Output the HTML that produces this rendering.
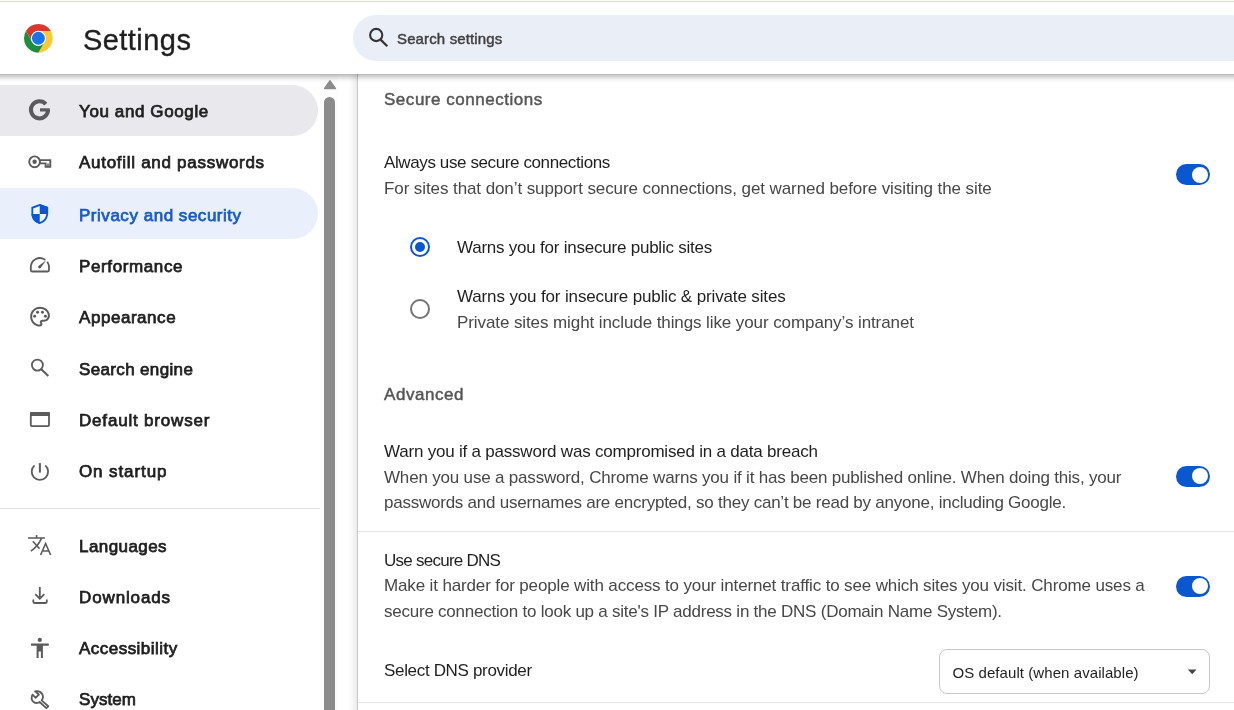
<!DOCTYPE html>
<html><head><meta charset="utf-8"><style>
html,body{margin:0;padding:0;width:1234px;height:710px;overflow:hidden;background:#fff;}
body{position:relative;font-family:"Liberation Sans", sans-serif;}
.t{position:absolute;white-space:nowrap;}
#topline{position:absolute;left:0;top:0;width:1234px;height:3px;background:linear-gradient(#f9f9f3 0,#f9f9f3 1px,#e1e2db 1px,#e1e2db 2px,#f9f9f4 2px);z-index:7;}
#header{position:absolute;left:0;top:3px;width:1234px;height:71px;background:#fff;z-index:5;}
#hshadow{position:absolute;left:0;top:74px;width:1234px;height:9px;background:linear-gradient(rgba(0,0,0,.30) 0px,rgba(0,0,0,.23) 1px,rgba(0,0,0,.19) 2px,rgba(0,0,0,.15) 3px,rgba(0,0,0,.11) 4px,rgba(0,0,0,.07) 5px,rgba(0,0,0,.04) 6px,rgba(0,0,0,.015) 7.5px,rgba(0,0,0,0) 9px);z-index:5;}
#search{position:absolute;left:353px;top:15px;width:900px;height:46px;border-radius:23px;background:#eaeef6;z-index:6;}
.pill{position:absolute;left:0;width:318px;height:51px;border-radius:0 25.5px 25.5px 0;}
#sep{position:absolute;left:0;top:508px;width:320px;height:1px;background:#e3e3e3;}
#track{position:absolute;left:320px;top:74px;width:18px;height:636px;background:#fcfcfc;}
#thumb{position:absolute;left:324px;top:97px;width:11px;height:620px;border-radius:5.5px;background:#8b8b8b;}
#card{position:absolute;left:357px;top:74px;width:900px;height:700px;background:#fff;border-left:1px solid #cacaca;box-shadow:-3px 0 6px rgba(0,0,0,.10);}
.div{position:absolute;left:358px;width:876px;height:1px;background:#e6e6e6;}
.tog{position:absolute;left:1176px;width:34px;height:21px;border-radius:10.5px;background:#0b57d0;}
.knob{position:absolute;left:15.5px;top:2.5px;width:16px;height:16px;border-radius:50%;background:#fff;}
.radio{position:absolute;width:16px;height:16px;border-radius:50%;border:2px solid #737373;}
#select{position:absolute;left:939px;top:648.5px;width:269px;height:43px;border:1px solid #c7c7c7;border-radius:8px;background:#fff;}
</style></head><body>
<div id="topline"></div>
<div id="card"></div>
<div class="div" style="top:531px"></div>
<div class="div" style="top:702px"></div>
<div class="pill" style="top:85px;background:#e9e9ed"></div>
<div class="pill" style="top:188px;background:#e9f0fc"></div>
<div id="sep"></div>
<div id="track"></div>
<div id="thumb"></div>
<svg style="position:absolute;left:322.5px;top:79px" width="14" height="11" viewBox="0 0 14 11"><path d="M7 1.9 L12.3 9.5 L1.7 9.5 Z" fill="#8b8b8b" stroke="#8b8b8b" stroke-linejoin="round" stroke-width="1.6"/></svg>
<div id="header"></div><div id="hshadow"></div>
<div id="search"></div>
<div class="tog" style="top:164.0px"><div class="knob"></div></div>
<div class="tog" style="top:465.9px"><div class="knob"></div></div>
<div class="tog" style="top:575.5px"><div class="knob"></div></div>

<div class="radio" style="left:410px;top:237px;border-color:#0b57d0"><div style="position:absolute;left:3px;top:3px;width:10px;height:10px;border-radius:50%;background:#0b57d0"></div></div>
<div class="radio" style="left:410px;top:299px"></div>
<div id="select"></div>
<svg style="position:absolute;left:1186.5px;top:668.5px" width="11" height="6" viewBox="0 0 11 6"><path d="M0.8 0.5 L9.6 0.5 L5.2 5.2 Z" fill="#474747"/></svg>
<div style="position:absolute;left:0;top:0;width:1234px;height:710px;z-index:10;will-change:transform">
<div class="t" style="left:83px;top:22.23px;font-size:29px;line-height:36.25px;font-weight:400;color:#1f1f1f;letter-spacing:0.4428px;-webkit-text-stroke:0.35px #1f1f1f;">Settings</div>
<div class="t" style="left:397px;top:29.73px;font-size:15px;line-height:18.75px;font-weight:400;color:#3f3f3f;letter-spacing:0.1355px;-webkit-text-stroke:0.45px #3f3f3f;">Search settings</div>
<div class="t" style="left:79px;top:100.58px;font-size:17px;line-height:21.25px;font-weight:400;color:#1f1f1f;letter-spacing:0.6078px;-webkit-text-stroke:0.75px #1f1f1f;">You and Google</div>
<div class="t" style="left:79px;top:152.28px;font-size:17px;line-height:21.25px;font-weight:400;color:#1f1f1f;letter-spacing:0.7143px;-webkit-text-stroke:0.75px #1f1f1f;">Autofill and passwords</div>
<div class="t" style="left:79px;top:204.58px;font-size:17px;line-height:21.25px;font-weight:400;color:#1a5cc9;letter-spacing:0.5263px;-webkit-text-stroke:0.75px #1a5cc9;">Privacy and security</div>
<div class="t" style="left:79px;top:255.68px;font-size:17px;line-height:21.25px;font-weight:400;color:#1f1f1f;letter-spacing:0.62px;-webkit-text-stroke:0.75px #1f1f1f;">Performance</div>
<div class="t" style="left:79px;top:307.48px;font-size:17px;line-height:21.25px;font-weight:400;color:#1f1f1f;letter-spacing:0.5444px;-webkit-text-stroke:0.75px #1f1f1f;">Appearance</div>
<div class="t" style="left:79px;top:358.78px;font-size:17px;line-height:21.25px;font-weight:400;color:#1f1f1f;letter-spacing:0.3499px;-webkit-text-stroke:0.75px #1f1f1f;">Search engine</div>
<div class="t" style="left:79px;top:410.18px;font-size:17px;line-height:21.25px;font-weight:400;color:#1f1f1f;letter-spacing:0.8143px;-webkit-text-stroke:0.75px #1f1f1f;">Default browser</div>
<div class="t" style="left:79px;top:461.38px;font-size:17px;line-height:21.25px;font-weight:400;color:#1f1f1f;letter-spacing:0.9001px;-webkit-text-stroke:0.75px #1f1f1f;">On startup</div>
<div class="t" style="left:79px;top:536.28px;font-size:17px;line-height:21.25px;font-weight:400;color:#1f1f1f;letter-spacing:0.425px;-webkit-text-stroke:0.75px #1f1f1f;">Languages</div>
<div class="t" style="left:79px;top:586.58px;font-size:17px;line-height:21.25px;font-weight:400;color:#1f1f1f;letter-spacing:0.875px;-webkit-text-stroke:0.75px #1f1f1f;">Downloads</div>
<div class="t" style="left:79px;top:638.18px;font-size:17px;line-height:21.25px;font-weight:400;color:#1f1f1f;letter-spacing:0.4664px;-webkit-text-stroke:0.75px #1f1f1f;">Accessibility</div>
<div class="t" style="left:79px;top:688.78px;font-size:17px;line-height:21.25px;font-weight:400;color:#1f1f1f;letter-spacing:0.06px;-webkit-text-stroke:0.75px #1f1f1f;">System</div>
<div class="t" style="left:384px;top:89.48px;font-size:17px;line-height:21.25px;font-weight:400;color:#555555;letter-spacing:0.5294px;-webkit-text-stroke:0.45px #555555;">Secure connections</div>
<div class="t" style="left:384px;top:151.98px;font-size:17px;line-height:21.25px;font-weight:400;color:#1f1f1f;letter-spacing:-0.3895px;">Always use secure connections</div>
<div class="t" style="left:384px;top:177.78px;font-size:17px;line-height:21.25px;font-weight:400;color:#474747;letter-spacing:-0.0892px;">For sites that don’t support secure connections, get warned before visiting the site</div>
<div class="t" style="left:457px;top:236.78px;font-size:17px;line-height:21.25px;font-weight:400;color:#1f1f1f;letter-spacing:-0.2263px;">Warns you for insecure public sites</div>
<div class="t" style="left:457px;top:285.58px;font-size:17px;line-height:21.25px;font-weight:400;color:#1f1f1f;letter-spacing:-0.1385px;">Warns you for insecure public &amp; private sites</div>
<div class="t" style="left:457px;top:311.68px;font-size:17px;line-height:21.25px;font-weight:400;color:#474747;letter-spacing:-0.0917px;">Private sites might include things like your company’s intranet</div>
<div class="t" style="left:384px;top:383.78px;font-size:17px;line-height:21.25px;font-weight:400;color:#555555;letter-spacing:0.543px;-webkit-text-stroke:0.45px #555555;">Advanced</div>
<div class="t" style="left:384px;top:440.68px;font-size:17px;line-height:21.25px;font-weight:400;color:#1f1f1f;letter-spacing:-0.2111px;">Warn you if a password was compromised in a data breach</div>
<div class="t" style="left:384px;top:466.88px;font-size:17px;line-height:21.25px;font-weight:400;color:#474747;letter-spacing:-0.1842px;">When you use a password, Chrome warns you if it has been published online. When doing this, your</div>
<div class="t" style="left:384px;top:491.98px;font-size:17px;line-height:21.25px;font-weight:400;color:#474747;letter-spacing:-0.2373px;">passwords and usernames are encrypted, so they can’t be read by anyone, including Google.</div>
<div class="t" style="left:384px;top:549.88px;font-size:17px;line-height:21.25px;font-weight:400;color:#1f1f1f;letter-spacing:-0.7464px;">Use secure DNS</div>
<div class="t" style="left:384px;top:575.38px;font-size:17px;line-height:21.25px;font-weight:400;color:#474747;letter-spacing:-0.1391px;">Make it harder for people with access to your internet traffic to see which sites you visit. Chrome uses a</div>
<div class="t" style="left:384px;top:601.08px;font-size:17px;line-height:21.25px;font-weight:400;color:#474747;letter-spacing:-0.2358px;">secure connection to look up a site's IP address in the DNS (Domain Name System).</div>
<div class="t" style="left:384px;top:660.28px;font-size:17px;line-height:21.25px;font-weight:400;color:#1f1f1f;letter-spacing:-0.3281px;">Select DNS provider</div>
<div class="t" style="left:952.5px;top:663.73px;font-size:15px;line-height:18.75px;font-weight:400;color:#1f1f1f;letter-spacing:0.0692px;">OS default (when available)</div>

<svg class="ic" style="position:absolute;left:0;top:0" width="80" height="80" viewBox="0 0 80 80">
<path d="M25.93 31.10 A14.4 14.4 0 0 1 50.87 31.10 L38.40 31.10 A7.2 7.2 0 0 0 32.16 41.90 Z" fill="#db372d"/><path d="M50.87 31.10 A14.4 14.4 0 0 1 38.40 52.70 L44.64 41.90 A7.2 7.2 0 0 0 38.40 31.10 Z" fill="#fcc934"/><path d="M38.40 52.70 A14.4 14.4 0 0 1 25.93 31.10 L32.16 41.90 A7.2 7.2 0 0 0 44.64 41.90 Z" fill="#1e8e3e"/>
<circle cx="38.4" cy="38.3" r="7.45" fill="#fff"/><circle cx="38.4" cy="38.3" r="6.45" fill="#1a73e8"/></svg>
<svg class="ic" style="position:absolute;left:0;top:0" width="60" height="710" viewBox="0 0 60 710"><path d="M45.85 104.08 A8.55 8.55 0 1 0 48.05 109.80" fill="none" stroke="#5b5b5b" stroke-width="4.0"/><rect x="40" y="108.3" width="9.8" height="3.2" fill="#5b5b5b"/><circle cx="34.6" cy="161.8" r="5.4" fill="none" stroke="#5b5b5b" stroke-width="1.9"/><circle cx="34.6" cy="161.8" r="2.2" fill="#5b5b5b"/><path d="M39.8 160.1 H50.3 V166.7 H45.6 V163.4 H39.8" fill="none" stroke="#5b5b5b" stroke-width="1.9" stroke-linejoin="miter"/><path d="M48.0 163.4 V166.9" stroke="#5b5b5b" stroke-width="1.5"/><defs><clipPath id="shc"><path d="M39.75 203.9 L48.1 207.1 V213.2 C48.1 218.6 44.6 222.6 39.75 223.9 C34.9 222.6 31.4 218.6 31.4 213.2 V207.1 Z"/></clipPath></defs><path d="M39.75 203.9 L48.1 207.1 V213.2 C48.1 218.6 44.6 222.6 39.75 223.9 C34.9 222.6 31.4 218.6 31.4 213.2 V207.1 Z" fill="#0b57d0"/><path d="M39.75 205.9 L46.3 208.4 V213.2 C46.3 217.5 43.6 220.7 39.75 221.9 C35.9 220.7 33.2 217.5 33.2 213.2 V208.4 Z" fill="#eef3fc"/><g clip-path="url(#shc)"><rect x="39.75" y="203" width="10" height="11" fill="#0b57d0"/><rect x="30" y="214" width="9.75" height="11" fill="#0b57d0"/></g><path d="M44.72 259.48 A9.1 9.1 0 0 0 30.80 267.20 V270.3 Q30.799999999999997 271.5 31.999999999999996 271.5 H47.8 Q49.0 271.5 49.0 270.3 V267.2 A9.1 9.1 0 0 0 47.62 262.38" fill="none" stroke="#5b5b5b" stroke-width="1.8" stroke-linecap="round"/><path d="M38.5 266.0 L46.3 260.3 L40.6 268.1 Z" fill="#5b5b5b"/><circle cx="39.6" cy="267.1" r="1.45" fill="#5b5b5b"/><g transform="translate(28.2 304.9) scale(0.985)"><path d="M12 22C6.49 22 2 17.51 2 12S6.49 2 12 2s10 4.04 10 9c0 3.31-2.69 6-6 6h-1.77c-.28 0-.5.22-.5.5 0 .12.05.23.13.33.41.47.64 1.06.64 1.67 0 1.38-1.12 2.5-2.5 2.5zm0-18c-4.41 0-8 3.59-8 8s3.59 8 8 8c.28 0 .5-.22.5-.5 0-.16-.08-.28-.14-.35-.41-.46-.63-1.05-.63-1.65 0-1.38 1.12-2.5 2.5-2.5H16c2.21 0 4-1.79 4-4 0-3.86-3.59-7-8-7z" fill="#5b5b5b"/><circle cx="6.5" cy="11.5" r="1.5" fill="#5b5b5b"/><circle cx="9.5" cy="7.5" r="1.5" fill="#5b5b5b"/><circle cx="14.5" cy="7.5" r="1.5" fill="#5b5b5b"/><circle cx="17.5" cy="11.5" r="1.5" fill="#5b5b5b"/></g><circle cx="37.4" cy="365.1" r="5.5" fill="none" stroke="#5b5b5b" stroke-width="1.8"/><path d="M41.3 369.2 L48.3 376" stroke="#5b5b5b" stroke-width="2"/><rect x="30.8" y="413" width="18.2" height="13.1" rx="1" fill="none" stroke="#5b5b5b" stroke-width="1.8"/><rect x="30" y="412.1" width="19.9" height="3.8" rx="1" fill="#5b5b5b"/><path d="M34.52 465.41 A8.2 8.2 0 1 0 45.28 465.41" fill="none" stroke="#5b5b5b" stroke-width="1.8"/><path d="M39.9 463.1 V472.6" stroke="#5b5b5b" stroke-width="2"/><path d="M28 538 H45 M36.6 534.9 V538 M32.8 541.2 L39.6 548.8 M41.6 538.2 C39 544 35 548.5 30.8 551.2" fill="none" stroke="#5b5b5b" stroke-width="1.6"/><path d="M40.6 555 L45.6 543.4 L50.6 555 M42.2 551 H49" fill="none" stroke="#5b5b5b" stroke-width="1.6"/><path d="M39.8 587 V598.4 M35.3 594.2 L39.8 598.7 L44.3 594.2" fill="none" stroke="#5b5b5b" stroke-width="1.8"/><path d="M33.3 600.2 V601.8 Q33.3 603 34.5 603 H45.6 Q46.8 603 46.8 601.8 V600.2" fill="none" stroke="#5b5b5b" stroke-width="1.8" stroke-linecap="round"/><circle cx="39.8" cy="639.9" r="2.1" fill="#5b5b5b"/><path d="M31 643.5 H48.8 V645.7 H42.9 V657.9 H40.9 V651.4 H38.6 V657.9 H36.6 V645.7 H31 Z" fill="#5b5b5b"/><path d="M32.5 694.6 L35.6 697.8 L38.9 694.5 L35.0 691.4 C37.5 690.9 40.8 691.6 42.3 694.2 C43.3 696.2 43.0 698.8 41.6 700.4 L48.3 706.3 L46.3 708.2 L39.6 702.0 C37.4 703.3 34.4 703.0 32.7 701.1 C31.4 699.4 31.5 696.6 32.5 694.6 Z" fill="none" stroke="#5b5b5b" stroke-width="1.8" stroke-linejoin="round"/></svg>
<svg class="ic" style="position:absolute;left:360px;top:20px" width="40" height="40" viewBox="360 20 40 40"><circle cx="376.2" cy="35" r="6.1" fill="none" stroke="#333333" stroke-width="2.1"/><path d="M380.6 39.6 L387.3 46.2" stroke="#333333" stroke-width="2.2"/></svg>

</div>
</body></html>
